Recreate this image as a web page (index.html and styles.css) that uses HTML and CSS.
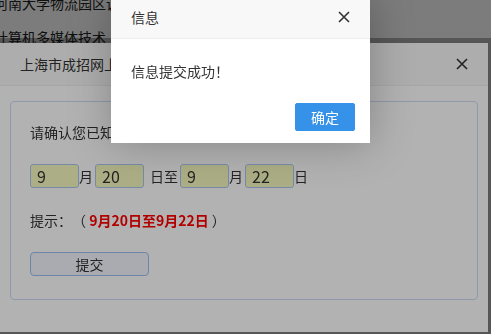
FILE: index.html
```html
<!DOCTYPE html>
<html lang="zh-CN">
<head>
<meta charset="utf-8">
<title>信息</title>
<link rel="stylesheet" href="styles.css">
</head>
<body>
<div class="page">
  <p>河南大学物流园区调试中心</p>
  <p>计算机多媒体技术</p>
</div>
<div class="shade"></div>
<div class="dialog">
  <div class="dlg-title">
    <span class="title-text">上海市成招网上报名系统</span>
    <svg class="close" width="12" height="12" viewBox="0 0 12 12"><path d="M1 1L11 11M11 1L1 11" stroke="#333" stroke-width="1.6" fill="none"/></svg>
  </div>
  <div class="dlg-body">
    <div class="panel">
      <div class="row">请确认您已知晓本次考试的时间安排：</div>
      <div class="row dates">
        <input class="day" value="9"><span class="unit">月</span>
        <input class="day gap" value="20"><span class="unit mid">日至</span>
        <input class="day" value="9"><span class="unit">月</span>
        <input class="day gap" value="22"><span class="unit">日</span>
      </div>
      <div class="row">提示：（ <b class="hl">9月20日至9月22日</b> ）</div>
      <div class="row"><button class="submit">提交</button></div>
    </div>
  </div>
</div>
<div class="shade"></div>
<div class="msg">
  <div class="msg-title">
    <span>信息</span>
    <svg class="close" width="12" height="12" viewBox="0 0 12 12"><path d="M1 1L11 11M11 1L1 11" stroke="#333" stroke-width="1.6" fill="none"/></svg>
  </div>
  <div class="msg-content">信息提交成功！</div>
  <div class="msg-btns"><button class="ok">确定</button></div>
</div>
</body>
</html>
```
FILE: styles.css
```css
* { box-sizing: border-box; }
html, body {
  margin: 0;
  padding: 0;
  width: 491px;
  height: 334px;
  overflow: hidden;
  background: #fff;
  font-family: "Noto Sans CJK SC", "Noto Sans", sans-serif;
  color: #333;
  text-spacing-trim: space-all;
}
.page {
  margin: -14px 0 0 -6px;
  font-size: 14px;
  line-height: 34px;
  color: #222;
}
.page p { margin: 0; white-space: nowrap; }

.shade {
  position: fixed;
  inset: 0;
  background: rgba(0, 0, 0, 0.3);
}

.dialog {
  position: absolute;
  left: 0;
  top: 43px;
  width: 488px;
  height: 289px;
  background: #fff;
  box-shadow: 0 0 0 5px rgba(0, 0, 0, 0.3);
  display: flex;
  flex-direction: column;
}
.dlg-title, .msg-title {
  height: 43px;
  flex: none;
  display: flex;
  align-items: center;
  justify-content: space-between;
  padding: 0 20px;
  background: #f8f8f8;
  border-bottom: 1px solid #eee;
  font-size: 14px;
  line-height: 20px;
  color: #333;
}
.title-text { white-space: nowrap; }
.close { flex: none; display: block; }

.dlg-body { padding: 15px 10px; }
.panel {
  border: 1px solid #cddcf7;
  border-radius: 4px;
  padding: 18px 19px 23px;
  display: flex;
  flex-direction: column;
  gap: 20px;
  font-size: 14px;
}
.row {
  height: 24px;
  line-height: 24px;
  display: flex;
  align-items: center;
  white-space: pre;
  color: #333;
}
.day {
  width: 49px;
  height: 24px;
  margin: 0;
  padding: 0 0 0 6px;
  border: 1px solid #abc8f3;
  border-radius: 3px;
  background: #f7fabf;
  font-family: "Noto Sans CJK SC", "Noto Sans", sans-serif;
  font-size: 16px;
  line-height: 22px;
  color: #333;
  outline: none;
}
.day.gap { margin-left: 2px; }
.unit { width: 14px; }
.unit.mid { width: auto; margin: 0 2px 0 6px; }
.hl { color: #f00; font-weight: bold; }
.submit {
  width: 119px;
  height: 24px;
  padding: 0;
  border: 1px solid #9cc0f0;
  border-radius: 4px;
  background: #f2f5fd;
  font-family: "Noto Sans CJK SC", "Noto Sans", sans-serif;
  font-size: 14px;
  line-height: 22px;
  color: #333;
}

.msg {
  position: absolute;
  left: 111px;
  top: -4px;
  width: 259px;
  background: #fff;
  box-shadow: 1px 1px 40px rgba(0, 0, 0, 0.25);
}
.msg-content {
  padding: 20px;
  font-size: 14px;
  line-height: 24px;
  color: #333;
}
.msg-btns {
  padding: 0 15px 12px;
  display: flex;
  justify-content: flex-end;
}
.ok {
  height: 28px;
  padding: 0 15px;
  border: 1px solid #3592e8;
  border-radius: 2px;
  background: #3592e8;
  color: #fff;
  font-family: "Noto Sans CJK SC", "Noto Sans", sans-serif;
  font-size: 14px;
  line-height: 26px;
}
```
